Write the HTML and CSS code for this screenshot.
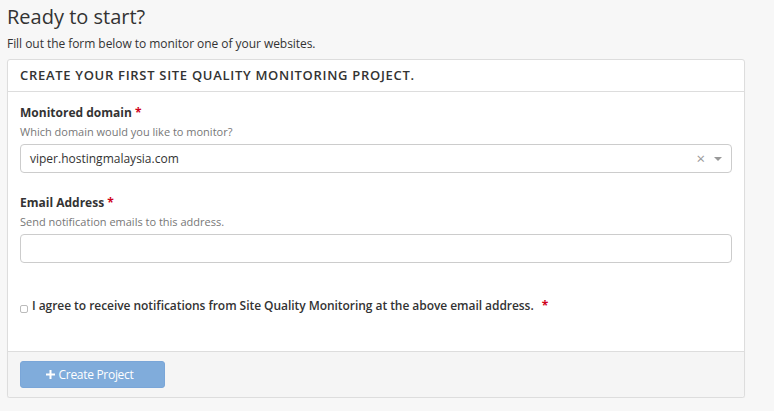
FILE: index.html
```html
<!DOCTYPE html>
<html lang="en">
<head>
<meta charset="utf-8">
<title>Ready to start?</title>
<link rel="stylesheet" href="styles.css">
</head>
<body>
<main class="page">
  <h1 class="page-title">Ready to start?</h1>
  <p class="page-lead">Fill out the form below to monitor one of your websites.</p>

  <form class="panel">
    <div class="panel-heading">Create your first Site Quality Monitoring project.</div>

    <div class="panel-body">
      <div class="field">
        <label class="field-label">Monitored domain <span class="req">*</span></label>
        <div class="field-help">Which domain would you like to monitor?</div>
        <div class="select">
          <span class="select-value">viper.hostingmalaysia.com</span>
          <span class="select-clear">×</span>
          <span class="select-arrow"></span>
        </div>
      </div>

      <div class="field">
        <label class="field-label">Email Address <span class="req">*</span></label>
        <div class="field-help">Send notification emails to this address.</div>
        <input class="input" type="text">
      </div>

      <label class="agree">
        <span class="checkbox"></span>
        <span class="agree-text">I agree to receive notifications from Site Quality Monitoring at the above email address.</span>
        <span class="req">*</span>
      </label>
    </div>

    <div class="panel-footer">
      <button type="button" class="btn-primary" disabled>
        <svg class="btn-icon" width="9" height="9" viewBox="0 0 9 9"><path d="M3.5 0h2v3.5H9v2H5.5V9h-2V5.5H0v-2h3.5z" fill="#fff"/></svg>
        Create Project
      </button>
    </div>
  </form>
</main>
</body>
</html>
```

FILE: styles.css
```css
html, body {
  margin: 0;
  padding: 0;
  background: #f7f7f7;
}

body {
  font-family: "Open Sans", "Noto Sans", sans-serif;
  color: #333;
  font-size: 12px;
}

.page {
  padding: 0 29px 0 7px;
}

.page-title {
  margin: 0;
  padding-top: 3px;
  font-size: 20px;
  font-weight: 400;
  line-height: 28px;
  color: #333;
}

.page-lead {
  margin: 4px 0 0;
  font-size: 12px;
  line-height: 18px;
  color: #333;
  letter-spacing: -0.05px;
}

.panel {
  margin-top: 6px;
  background: #fff;
  border: 1px solid #ddd;
  border-radius: 3px;
  box-shadow: 0 1px 1px rgba(0, 0, 0, 0.05);
}

.panel-heading {
  height: 31px;
  line-height: 31px;
  padding: 0 12px;
  border-bottom: 1px solid #ddd;
  text-transform: uppercase;
  font-size: 13px;
  font-weight: 600;
  letter-spacing: 0.7px;
  color: #333;
}

.panel-body {
  padding: 12px 12px 36px;
}

.field {
  margin-bottom: 21px;
}

.field-label {
  display: block;
  font-size: 12px;
  font-weight: 700;
  line-height: 18px;
}

.req {
  color: #d0021b;
  font-weight: 700;
}

.field-help {
  margin-top: 2px;
  font-size: 11px;
  line-height: 16px;
  color: #777;
}

.select,
.input {
  box-sizing: border-box;
  display: flex;
  align-items: center;
  width: 100%;
  height: 29px;
  margin-top: 4px;
  border: 1px solid #ccc;
  border-radius: 4px;
  background: #fff;
}

.select {
  padding: 0 9px 0 9px;
}

.select-value {
  flex: 1;
  font-size: 12px;
  color: #333;
}

.select-clear {
  font-size: 15px;
  line-height: 1;
  color: #999;
  margin-right: 9px;
}

.select-arrow {
  width: 0;
  height: 0;
  border-left: 4px solid transparent;
  border-right: 4px solid transparent;
  border-top: 4px solid #999;
}

.input {
  font: inherit;
  padding: 0 9px;
  outline: none;
}

.agree {
  display: flex;
  align-items: center;
  margin-top: 34px;
  font-size: 12px;
  font-weight: 600;
  line-height: 18px;
}

.agree-text {
  letter-spacing: -0.05px;
}

.checkbox {
  box-sizing: border-box;
  width: 8px;
  height: 8px;
  margin: 5px 4px 0 0;
  border: 1px solid #bbb;
  border-radius: 2px;
  background: #fff;
}

.agree .req {
  margin-left: 8px;
}

.panel-footer {
  display: flex;
  padding: 9px 12px 9px;
  background: #f5f5f5;
  border-top: 1px solid #ddd;
  border-radius: 0 0 3px 3px;
}

.btn-primary {
  display: inline-flex;
  align-items: center;
  justify-content: center;
  gap: 4px;
  width: 145px;
  height: 27px;
  padding: 0 6px 0 0;
  border: 1px solid #7aa6d8;
  border-radius: 3px;
  background: #80acdb;
  color: #fff;
  font-family: inherit;
  font-size: 12px;
  letter-spacing: -0.3px;
}

.btn-icon {
  display: block;
}
```
